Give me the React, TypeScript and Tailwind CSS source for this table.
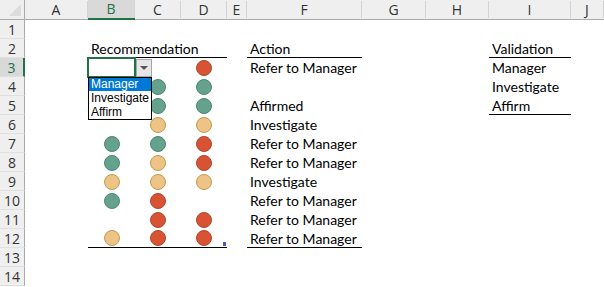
import React from "react";

type C = "g" | "y" | "r" | null;

const cols = ["A", "B", "C", "D", "E", "F", "G", "H", "I", "J"];

const circles: Record<number, [C, C, C]> = {
  3: [null, null, "r"],
  4: [null, "g", "g"],
  5: [null, "g", "g"],
  6: [null, "y", "y"],
  7: ["g", "g", "r"],
  8: ["g", "y", "r"],
  9: ["y", "y", "y"],
  10: ["g", "r", null],
  11: [null, "r", "r"],
  12: ["y", "r", "r"],
};

const action: Record<number, string> = {
  2: "Action",
  3: "Refer to Manager",
  5: "Affirmed",
  6: "Investigate",
  7: "Refer to Manager",
  8: "Refer to Manager",
  9: "Investigate",
  10: "Refer to Manager",
  11: "Refer to Manager",
  12: "Refer to Manager",
};

const validation: Record<number, string> = {
  2: "Validation",
  3: "Manager",
  4: "Investigate",
  5: "Affirm",
};

function Dot({ c }: { c: C }) {
  if (!c) return null;
  const cls =
    c === "g"
      ? "bg-[#64a28e] border-[#4d8572]"
      : c === "y"
      ? "bg-[#edc386] border-[#c39a4e]"
      : "bg-[#d75333] border-[#b3432a]";
  return <div className={`w-[16px] h-[16px] rounded-full border ${cls}`} />;
}

export default function App() {
  const font = { fontFamily: "Lato, 'Liberation Sans', sans-serif" };
  const rows = Array.from({ length: 14 }, (_, i) => i + 1);
  return (
    <div className="relative w-[604px] h-[287px] overflow-hidden bg-white">
      <div className="grid grid-cols-[25px_63px_47px_46px_46px_20px_115px_64px_63px_82px_1fr] grid-rows-[20px_repeat(14,19px)]">
        {/* corner */}
        <div className="relative bg-[#efefef] border-b border-r border-[#ababab]">
          <div className="absolute right-[3px] bottom-[3px] w-0 h-0 border-l-[12px] border-l-transparent border-b-[12px] border-b-[#dcdcdc]" />
        </div>
        {cols.map((c) => (
          <div
            key={c}
            className={`flex items-center justify-center text-[14px] border-b border-[#ababab] ${
              c === "B"
                ? "bg-[#d9d9d9] border-b-2 border-b-[#217346] text-[#217346]"
                : "bg-[#efefef] text-[#333]"
            }`}
            style={{ fontFamily: "'Open Sans', 'Noto Sans', sans-serif" }}
          >
            <div className="w-full h-[17px] flex items-center justify-center border-r border-[#d4d4d4] leading-none">
              {c}
            </div>
          </div>
        ))}
        {rows.map((r) => {
          const dots = circles[r];
          const underlineB = r === 2 || r === 12;
          return (
            <React.Fragment key={r}>
              <div
                className={`flex items-center justify-center text-[14px] border-b border-[#e0e0e0] ${
                  r === 3
                    ? "bg-[#d9d9d9] border-r-2 border-r-[#217346] text-[#217346]"
                    : "bg-[#efefef] border-r border-r-[#ababab] text-[#333]"
                }`}
                style={{ fontFamily: "'Open Sans', 'Noto Sans', sans-serif" }}
              >
                {r}
              </div>
              {/* A */}
              <div />
              {/* B */}
              <div
                className={`flex items-center justify-center ${underlineB ? "border-b border-black" : ""}`}
              >
                {r === 2 ? (
                  <span className="w-full pl-[3px] text-[14px] text-black whitespace-nowrap" style={font}>
                    Recommendation
                  </span>
                ) : (
                  dots && <Dot c={dots[0]} />
                )}
              </div>
              {/* C */}
              <div className={`flex items-center justify-center ${underlineB ? "border-b border-black" : ""}`}>
                {dots && <Dot c={dots[1]} />}
              </div>
              {/* D */}
              <div className={`relative flex items-center justify-center ${underlineB ? "border-b border-black" : ""}`}>
                {dots && <Dot c={dots[2]} />}
                {r === 12 && (
                  <div className="absolute right-[1px] bottom-[1px] w-[3px] h-[4px] bg-[#4a5cc0]" />
                )}
              </div>
              {/* E */}
              <div />
              {/* F */}
              <div
                className={`flex items-center pl-[3px] text-[14px] text-black whitespace-nowrap ${
                  r === 2 || r === 12 ? "border-b border-black" : ""
                }`}
                style={font}
              >
                {action[r] ?? ""}
              </div>
              {/* G */}
              <div />
              {/* H */}
              <div />
              {/* I */}
              <div
                className={`flex items-center pl-[3px] text-[14px] text-black whitespace-nowrap ${
                  r === 2 || r === 5 ? "border-b border-black" : ""
                }`}
                style={font}
              >
                {validation[r] ?? ""}
              </div>
              {/* J */}
              <div />
            </React.Fragment>
          );
        })}
      </div>

      {/* selection */}
      <div className="absolute left-[87px] top-[57px] w-[49px] h-[21px] border-2 border-[#217346]" />
      {/* dropdown button */}
      <div className="absolute left-[136px] top-[59px] w-[16px] h-[18px] bg-[#e6e6e6] border border-[#a6a6a6] flex items-center justify-center">
        <div className="w-0 h-0 border-l-[4px] border-r-[4px] border-t-[4px] border-l-transparent border-r-transparent border-t-[#555]" />
      </div>
      {/* dropdown list */}
      <div
        className="absolute left-[88px] top-[77px] w-[64px] h-[43px] bg-white border border-black flex flex-col text-[12px] leading-[13px]"
        style={{ fontFamily: "'Liberation Sans', Arial, sans-serif" }}
      >
        <div className="h-[13px] bg-[#0078d7] text-white pl-[2px]">Manager</div>
        <div className="h-[14px] text-black pl-[2px] pt-[1px]">Investigate</div>
        <div className="h-[14px] text-black pl-[2px] pt-[1px]">Affirm</div>
      </div>
    </div>
  );
}
